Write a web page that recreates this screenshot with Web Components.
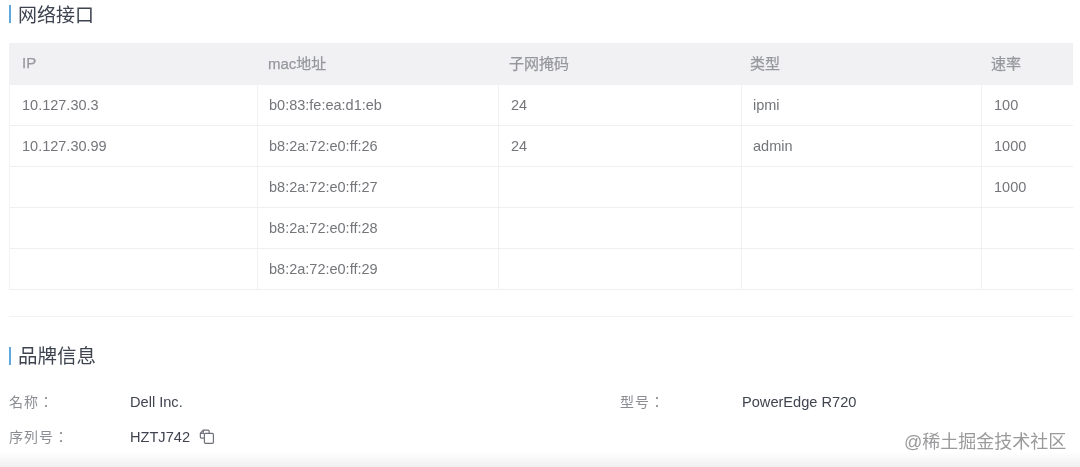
<!doctype html>
<html>
<head>
<meta charset="utf-8">
<title>server-detail</title>
<style>
  html, body { height: 100%; }
  body {
    margin: 0;
    background: #fff;
    font-family: "Liberation Sans", "Noto Sans CJK SC", sans-serif;
    overflow: hidden;
  }
</style>
</head>
<body>
<detail-page>
  <section-title>网络接口</section-title>
  <net-table>
    <net-head>
      <span>IP</span><span>mac地址</span><span>子网掩码</span><span>类型</span><span>速率</span>
    </net-head>
    <net-row ip="10.127.30.3" mac="b0:83:fe:ea:d1:eb" mask="24" kind="ipmi" rate="100"></net-row>
    <net-row ip="10.127.30.99" mac="b8:2a:72:e0:ff:26" mask="24" kind="admin" rate="1000"></net-row>
    <net-row mac="b8:2a:72:e0:ff:27" rate="1000"></net-row>
    <net-row mac="b8:2a:72:e0:ff:28"></net-row>
    <net-row mac="b8:2a:72:e0:ff:29"></net-row>
  </net-table>
  <section-title class="brand">品牌信息</section-title>
  <info-grid>
    <info-item label="名称："><span>Dell Inc.</span></info-item>
    <info-item label="型号："><span>PowerEdge R720</span></info-item>
    <info-item label="序列号："><span>HZTJ742</span><copy-icon></copy-icon></info-item>
  </info-grid>
</detail-page>
<water-mark>@稀土掘金技术社区</water-mark>
<bottom-fade></bottom-fade>

<script>
  customElements.define('detail-page', class extends HTMLElement {
    constructor() {
      super();
      this.attachShadow({mode: 'open'}).innerHTML = `
        <style>
          :host { display: block; padding: 0 7px 0 9px; filter: blur(.5px); }
          ::slotted(section-title.brand) {
            margin-top: 26px;
            padding-top: 25px;
            border-top: 1px solid #f1f2f4;
            font-size: 19.5px;
            --title-shift: 0px;
          }
        </style>
        <slot></slot>`;
    }
  });

  customElements.define('section-title', class extends HTMLElement {
    constructor() {
      super();
      this.attachShadow({mode: 'open'}).innerHTML = `
        <style>
          :host { display: block; color: #3d4450; font-size: 19px; line-height: 28px; }
          div { display: flex; align-items: center; gap: 7px; height: 28px; }
          i { width: 2px; height: 18px; background: #5fa9dc; }
          span { padding-top: var(--title-shift, 3px); }
        </style>
        <div><i></i><span><slot></slot></span></div>`;
    }
  });

  customElements.define('net-table', class extends HTMLElement {
    constructor() {
      super();
      this.attachShadow({mode: 'open'}).innerHTML = `
        <style>
          :host {
            display: block;
            margin-top: 15px;
            font-size: 14.5px;
            --cols: 248px 241px 243px 240px 92px;
          }
        </style>
        <slot></slot>`;
    }
  });

  customElements.define('net-head', class extends HTMLElement {
    constructor() {
      super();
      this.attachShadow({mode: 'open'}).innerHTML = `
        <style>
          :host {
            display: grid;
            grid-template-columns: 246px 241px 241px 241px 95px;
            height: 42px;
            align-items: center;
            background: #f1f1f3;
            color: #96989e;
            font-size: 15px;
          }
          ::slotted(span) {
            padding-left: 13px;
            padding-bottom: 3px;
            -webkit-text-stroke: .25px #96989e;
          }
        </style>
        <slot></slot>`;
    }
  });

  customElements.define('net-row', class extends HTMLElement {
    constructor() {
      super();
      const cols = ['ip', 'mac', 'mask', 'kind', 'rate'];
      this.attachShadow({mode: 'open'}).innerHTML = `
        <style>
          :host {
            display: grid;
            grid-template-columns: var(--cols);
            height: 41px;
            box-sizing: border-box;
            border-bottom: 1px solid #eeeff1;
            border-left: 1px solid #f2f3f4;
            color: #74767b;
          }
          div {
            display: flex;
            align-items: center;
            padding-left: 12px;
            border-right: 1px solid #f0f1f3;
            white-space: nowrap;
          }
          div:nth-of-type(2), div:nth-of-type(4) { padding-left: 11px; }
          div:last-child { border-right: 0; }
        </style>
        ${cols.map(c => `<div>${this.getAttribute(c) || ''}</div>`).join('')}`;
    }
  });

  customElements.define('info-grid', class extends HTMLElement {
    constructor() {
      super();
      this.attachShadow({mode: 'open'}).innerHTML = `
        <style>
          :host {
            display: grid;
            grid-template-columns: 611px 1fr;
            margin-top: 14px;
            font-size: 14.6px;
          }
        </style>
        <slot></slot>`;
    }
  });

  customElements.define('info-item', class extends HTMLElement {
    constructor() {
      super();
      this.attachShadow({mode: 'open'}).innerHTML = `
        <style>
          :host { display: flex; align-items: center; height: 35px; color: #3f4450; }
          :host(:nth-child(2)) b { width: 122px; }
          b {
            width: 121px; flex: none;
            font: 400 14px/20px "Noto Sans CJK TC", sans-serif;
            color: #8b8d93;
            letter-spacing: 1px;
            padding-bottom: 2px;
          }
        </style>
        <b>${this.getAttribute('label')}</b><slot></slot>`;
    }
  });

  customElements.define('copy-icon', class extends HTMLElement {
    constructor() {
      super();
      this.attachShadow({mode: 'open'}).innerHTML = `
        <style>
          :host { display: inline-flex; margin-left: 8px; }
          svg { display: block; }
        </style>
        <svg width="17" height="17" viewBox="0 0 16 16" fill="none" stroke="#6d7078" stroke-width="1.1">
          <path d="M6 9.5H3.2a1 1 0 0 1-1-1V5L5 2h4.5a1 1 0 0 1 1 1v2"/>
          <path d="M2.4 5H5V2.2"/>
          <path d="M7 5h6.5a1 1 0 0 1 1 1v7.5a1 1 0 0 1-1 1H7a1 1 0 0 1-1-1V6a1 1 0 0 1 1-1z"/>
        </svg>`;
    }
  });

  customElements.define('water-mark', class extends HTMLElement {
    constructor() {
      super();
      this.attachShadow({mode: 'open'}).innerHTML = `
        <style>
          :host {
            position: fixed; left: 904px; top: 431px;
            color: #9a9a9c; font-size: 18px; line-height: 22px; white-space: nowrap;
            filter: blur(.4px);
          }
        </style>
        <slot></slot>`;
    }
  });

  customElements.define('bottom-fade', class extends HTMLElement {
    constructor() {
      super();
      this.attachShadow({mode: 'open'}).innerHTML = `
        <style>
          :host {
            position: fixed; left: 0; right: 0; bottom: 0; height: 15px;
            background: linear-gradient(#ffffff00, #f1f1f1);
          }
        </style>`;
    }
  });
</script>
</body>
</html>
